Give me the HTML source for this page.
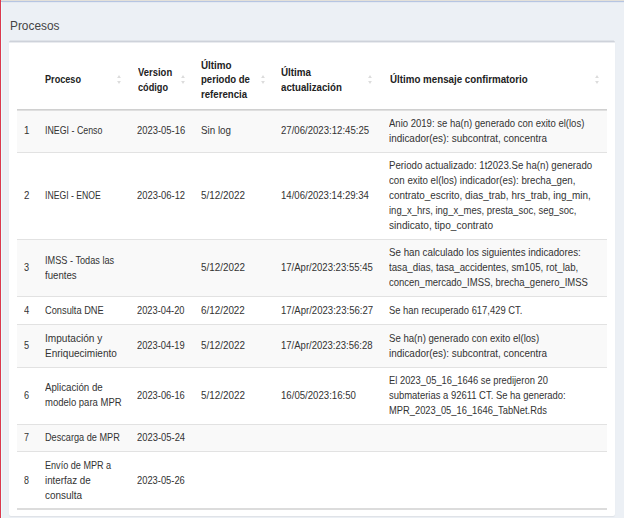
<!DOCTYPE html>
<html><head><meta charset="utf-8"><style>
html,body{margin:0;padding:0;width:624px;height:518px;overflow:hidden;background:#ecf0f5;position:relative}
.t{position:absolute;white-space:nowrap;line-height:1;font-family:"Liberation Sans",sans-serif;color:#333;transform-origin:0 0}
.a{position:absolute}
</style></head><body>
<div class="a" style="left:0;top:0;width:624px;height:1px;background:#e3e0d9"></div>
<div class="a" style="left:0;top:1px;width:624px;height:1px;background:#b6c5e2"></div>
<div class="a" style="left:0;top:2px;width:624px;height:1px;background:#e4e9f1"></div>
<div class="a" style="left:0;top:0;width:1px;height:518px;background:#db3a4f"></div>
<div class="a" style="left:1px;top:2px;width:1px;height:516px;background:#e8fdff"></div>
<div class="a" style="left:9px;top:41px;width:606px;height:475px;background:#fff;border-radius:2px;box-shadow:0 1px 1px rgba(0,0,0,0.06)"></div>
<div class="a" style="left:10px;top:40px;width:604px;height:1px;background:#dfe3e9"></div>
<div class="a" style="left:9px;top:41px;width:606px;height:1px;background:#ced2da;border-radius:2px 2px 0 0"></div>
<div class="a" style="left:9px;top:42px;width:606px;height:1px;background:#e9ebef"></div>

<div class="a" style="left:16.5px;top:110.5px;width:590.5px;height:41.5px;background:#f9f9f9"></div>
<div class="a" style="left:16.5px;top:240.1px;width:590.5px;height:56.400000000000006px;background:#f9f9f9"></div>
<div class="a" style="left:16.5px;top:325.0px;width:590.5px;height:42.0px;background:#f9f9f9"></div>
<div class="a" style="left:16.5px;top:424.8px;width:590.5px;height:27.0px;background:#f9f9f9"></div>
<div class="a" style="left:16.5px;top:109px;width:590.5px;height:1px;background:#d0d0d0"></div>
<div class="a" style="left:16.5px;top:110px;width:590.5px;height:1px;background:#dfdfdf"></div>
<div class="a" style="left:16.5px;top:151.5px;width:590.5px;height:1px;background:#e2e2e2"></div>
<div class="a" style="left:16.5px;top:239.1px;width:590.5px;height:1px;background:#e2e2e2"></div>
<div class="a" style="left:16.5px;top:296.0px;width:590.5px;height:1px;background:#e2e2e2"></div>
<div class="a" style="left:16.5px;top:324.0px;width:590.5px;height:1px;background:#e2e2e2"></div>
<div class="a" style="left:16.5px;top:366.5px;width:590.5px;height:1px;background:#e2e2e2"></div>
<div class="a" style="left:16.5px;top:423.8px;width:590.5px;height:1px;background:#e2e2e2"></div>
<div class="a" style="left:16.5px;top:451.3px;width:590.5px;height:1px;background:#e2e2e2"></div>
<div class="a" style="left:16.5px;top:508.25px;width:590.5px;height:1.5px;background:#dcdcdc"></div>
<svg class="a" style="left:116px;top:74px" width="6" height="11" viewBox="0 0 6 11"><path d="M1.1 3.9 L3 1.1 L4.9 3.9Z M1.1 7 L3 9.9 L4.9 7Z" fill="#dcdcdc"/></svg>
<svg class="a" style="left:179.5px;top:74px" width="6" height="11" viewBox="0 0 6 11"><path d="M1.1 3.9 L3 1.1 L4.9 3.9Z M1.1 7 L3 9.9 L4.9 7Z" fill="#dcdcdc"/></svg>
<svg class="a" style="left:259.7px;top:74px" width="6" height="11" viewBox="0 0 6 11"><path d="M1.1 3.9 L3 1.1 L4.9 3.9Z M1.1 7 L3 9.9 L4.9 7Z" fill="#dcdcdc"/></svg>
<svg class="a" style="left:367.2px;top:74px" width="6" height="11" viewBox="0 0 6 11"><path d="M1.1 3.9 L3 1.1 L4.9 3.9Z M1.1 7 L3 9.9 L4.9 7Z" fill="#dcdcdc"/></svg>
<svg class="a" style="left:593.7px;top:74px" width="6" height="11" viewBox="0 0 6 11"><path d="M1.1 3.9 L3 1.1 L4.9 3.9Z M1.1 7 L3 9.9 L4.9 7Z" fill="#dcdcdc"/></svg>
<div id="t0" class="t" style="left:24.35px;top:126.30px;font-size:10.1px;font-weight:400;color:#333;transform:scaleX(0.9685)">1</div>
<div id="t1" class="t" style="left:44.62px;top:126.30px;font-size:10.1px;font-weight:400;color:#333;transform:scaleX(0.8751)">INEGI - Censo</div>
<div id="t2" class="t" style="left:137.41px;top:126.30px;font-size:10.1px;font-weight:400;color:#333;transform:scaleX(0.9319)">2023-05-16</div>
<div id="t3" class="t" style="left:200.81px;top:126.30px;font-size:10.1px;font-weight:400;color:#333;transform:scaleX(0.9708)">Sin log</div>
<div id="t4" class="t" style="left:281.02px;top:126.30px;font-size:10.1px;font-weight:400;color:#333;transform:scaleX(0.9511)">27/06/2023:12:45:25</div>
<div id="t5" class="t" style="left:389.29px;top:118.80px;font-size:10.1px;font-weight:400;color:#333;transform:scaleX(0.9434)">Anio 2019: se ha(n) generado con exito el(los)</div>
<div id="t6" class="t" style="left:389.38px;top:133.80px;font-size:10.1px;font-weight:400;color:#333;transform:scaleX(0.9814)">indicador(es): subcontrat, concentra</div>
<div id="t7" class="t" style="left:24.40px;top:191.10px;font-size:10.1px;font-weight:400;color:#333;transform:scaleX(0.9600)">2</div>
<div id="t8" class="t" style="left:44.63px;top:191.10px;font-size:10.1px;font-weight:400;color:#333;transform:scaleX(0.8568)">INEGI - ENOE</div>
<div id="t9" class="t" style="left:137.41px;top:191.10px;font-size:10.1px;font-weight:400;color:#333;transform:scaleX(0.9314)">2023-06-12</div>
<div id="t10" class="t" style="left:201.11px;top:191.10px;font-size:10.1px;font-weight:400;color:#333;transform:scaleX(0.9772)">5/12/2022</div>
<div id="t11" class="t" style="left:281.03px;top:191.10px;font-size:10.1px;font-weight:400;color:#333;transform:scaleX(0.9489)">14/06/2023:14:29:34</div>
<div id="t12" class="t" style="left:389.09px;top:161.10px;font-size:10.1px;font-weight:400;color:#333;transform:scaleX(0.9577)">Periodo actualizado: 1t2023.Se ha(n) generado</div>
<div id="t13" class="t" style="left:389.37px;top:176.10px;font-size:10.1px;font-weight:400;color:#333;transform:scaleX(0.9634)">con exito el(los) indicador(es): brecha_gen,</div>
<div id="t14" class="t" style="left:389.37px;top:191.10px;font-size:10.1px;font-weight:400;color:#333;transform:scaleX(0.9825)">contrato_escrito, dias_trab, hrs_trab, ing_min,</div>
<div id="t15" class="t" style="left:389.38px;top:206.10px;font-size:10.1px;font-weight:400;color:#333;transform:scaleX(0.9412)">ing_x_hrs, ing_x_mes, presta_soc, seg_soc,</div>
<div id="t16" class="t" style="left:389.18px;top:221.10px;font-size:10.1px;font-weight:400;color:#333;transform:scaleX(1.0020)">sindicato, tipo_contrato</div>
<div id="t17" class="t" style="left:24.42px;top:263.35px;font-size:10.1px;font-weight:400;color:#333;transform:scaleX(0.9057)">3</div>
<div id="t18" class="t" style="left:44.62px;top:255.85px;font-size:10.1px;font-weight:400;color:#333;transform:scaleX(0.9079)">IMSS - Todas las</div>
<div id="t19" class="t" style="left:44.61px;top:270.85px;font-size:10.1px;font-weight:400;color:#333;transform:scaleX(0.9545)">fuentes</div>
<div id="t20" class="t" style="left:201.10px;top:263.35px;font-size:10.1px;font-weight:400;color:#333;transform:scaleX(0.9773)">5/12/2022</div>
<div id="t21" class="t" style="left:281.03px;top:263.35px;font-size:10.1px;font-weight:400;color:#333;transform:scaleX(0.9449)">17/Apr/2023:23:55:45</div>
<div id="t22" class="t" style="left:388.74px;top:248.35px;font-size:10.1px;font-weight:400;color:#333;transform:scaleX(0.9655)">Se han calculado los siguientes indicadores:</div>
<div id="t23" class="t" style="left:389.38px;top:263.35px;font-size:10.1px;font-weight:400;color:#333;transform:scaleX(0.9611)">tasa_dias, tasa_accidentes, sm105, rot_lab,</div>
<div id="t24" class="t" style="left:389.34px;top:278.35px;font-size:10.1px;font-weight:400;color:#333;transform:scaleX(0.9403)">concen_mercado_IMSS, brecha_genero_IMSS</div>
<div id="t25" class="t" style="left:24.38px;top:305.80px;font-size:10.1px;font-weight:400;color:#333;transform:scaleX(0.9317)">4</div>
<div id="t26" class="t" style="left:44.61px;top:305.80px;font-size:10.1px;font-weight:400;color:#333;transform:scaleX(0.9178)">Consulta DNE</div>
<div id="t27" class="t" style="left:137.41px;top:305.80px;font-size:10.1px;font-weight:400;color:#333;transform:scaleX(0.9205)">2023-04-20</div>
<div id="t28" class="t" style="left:201.16px;top:305.80px;font-size:10.1px;font-weight:400;color:#333;transform:scaleX(0.9760)">6/12/2022</div>
<div id="t29" class="t" style="left:281.03px;top:305.80px;font-size:10.1px;font-weight:400;color:#333;transform:scaleX(0.9485)">17/Apr/2023:23:56:27</div>
<div id="t30" class="t" style="left:388.75px;top:305.80px;font-size:10.1px;font-weight:400;color:#333;transform:scaleX(0.9320)">Se han recuperado 617,429 CT.</div>
<div id="t31" class="t" style="left:24.42px;top:341.05px;font-size:10.1px;font-weight:400;color:#333;transform:scaleX(0.9095)">5</div>
<div id="t32" class="t" style="left:44.60px;top:333.55px;font-size:10.1px;font-weight:400;color:#333;transform:scaleX(1.0018)">Imputación y</div>
<div id="t33" class="t" style="left:44.60px;top:348.55px;font-size:10.1px;font-weight:400;color:#333;transform:scaleX(0.9931)">Enriquecimiento</div>
<div id="t34" class="t" style="left:137.41px;top:341.05px;font-size:10.1px;font-weight:400;color:#333;transform:scaleX(0.9240)">2023-04-19</div>
<div id="t35" class="t" style="left:201.10px;top:341.05px;font-size:10.1px;font-weight:400;color:#333;transform:scaleX(0.9773)">5/12/2022</div>
<div id="t36" class="t" style="left:281.03px;top:341.05px;font-size:10.1px;font-weight:400;color:#333;transform:scaleX(0.9431)">17/Apr/2023:23:56:28</div>
<div id="t37" class="t" style="left:388.74px;top:333.55px;font-size:10.1px;font-weight:400;color:#333;transform:scaleX(0.9521)">Se ha(n) generado con exito el(los)</div>
<div id="t38" class="t" style="left:389.38px;top:348.55px;font-size:10.1px;font-weight:400;color:#333;transform:scaleX(0.9814)">indicador(es): subcontrat, concentra</div>
<div id="t39" class="t" style="left:24.42px;top:390.95px;font-size:10.1px;font-weight:400;color:#333;transform:scaleX(0.9047)">6</div>
<div id="t40" class="t" style="left:44.60px;top:383.45px;font-size:10.1px;font-weight:400;color:#333;transform:scaleX(0.9617)">Aplicación de</div>
<div id="t41" class="t" style="left:44.61px;top:398.45px;font-size:10.1px;font-weight:400;color:#333;transform:scaleX(0.9420)">modelo para MPR</div>
<div id="t42" class="t" style="left:137.41px;top:390.95px;font-size:10.1px;font-weight:400;color:#333;transform:scaleX(0.9258)">2023-06-16</div>
<div id="t43" class="t" style="left:201.12px;top:390.95px;font-size:10.1px;font-weight:400;color:#333;transform:scaleX(0.9768)">5/12/2022</div>
<div id="t44" class="t" style="left:281.02px;top:390.95px;font-size:10.1px;font-weight:400;color:#333;transform:scaleX(0.9538)">16/05/2023:16:50</div>
<div id="t45" class="t" style="left:389.19px;top:375.95px;font-size:10.1px;font-weight:400;color:#333;transform:scaleX(0.9282)">El 2023_05_16_1646 se predijeron 20</div>
<div id="t46" class="t" style="left:389.18px;top:390.95px;font-size:10.1px;font-weight:400;color:#333;transform:scaleX(0.9356)">submaterias a 92611 CT. Se ha generado:</div>
<div id="t47" class="t" style="left:389.19px;top:405.95px;font-size:10.1px;font-weight:400;color:#333;transform:scaleX(0.9251)">MPR_2023_05_16_1646_TabNet.Rds</div>
<div id="t48" class="t" style="left:24.42px;top:433.35px;font-size:10.1px;font-weight:400;color:#333;transform:scaleX(0.8900)">7</div>
<div id="t49" class="t" style="left:44.62px;top:433.35px;font-size:10.1px;font-weight:400;color:#333;transform:scaleX(0.9073)">Descarga de MPR</div>
<div id="t50" class="t" style="left:137.41px;top:433.35px;font-size:10.1px;font-weight:400;color:#333;transform:scaleX(0.9314)">2023-05-24</div>
<div id="t51" class="t" style="left:24.37px;top:475.70px;font-size:10.1px;font-weight:400;color:#333;transform:scaleX(0.8833)">8</div>
<div id="t52" class="t" style="left:44.62px;top:460.70px;font-size:10.1px;font-weight:400;color:#333;transform:scaleX(0.9001)">Envío de MPR a</div>
<div id="t53" class="t" style="left:44.60px;top:475.70px;font-size:10.1px;font-weight:400;color:#333;transform:scaleX(0.9702)">interfaz de</div>
<div id="t54" class="t" style="left:44.60px;top:490.70px;font-size:10.1px;font-weight:400;color:#333;transform:scaleX(0.9858)">consulta</div>
<div id="t55" class="t" style="left:137.41px;top:475.70px;font-size:10.1px;font-weight:400;color:#333;transform:scaleX(0.9258)">2023-05-26</div>
<div id="t56" class="t" style="left:44.62px;top:75.30px;font-size:10.4px;font-weight:700;color:#222;transform:scaleX(0.8780)">Proceso</div>
<div id="t57" class="t" style="left:137.66px;top:67.95px;font-size:10.4px;font-weight:700;color:#222;transform:scaleX(0.9100)">Version</div>
<div id="t58" class="t" style="left:137.62px;top:82.65px;font-size:10.4px;font-weight:700;color:#222;transform:scaleX(0.8822)">código</div>
<div id="t59" class="t" style="left:201.40px;top:60.60px;font-size:10.4px;font-weight:700;color:#222;transform:scaleX(0.9469)">Último</div>
<div id="t60" class="t" style="left:201.41px;top:75.30px;font-size:10.4px;font-weight:700;color:#222;transform:scaleX(0.9208)">periodo de</div>
<div id="t61" class="t" style="left:201.41px;top:90.00px;font-size:10.4px;font-weight:700;color:#222;transform:scaleX(0.9273)">referencia</div>
<div id="t62" class="t" style="left:281.40px;top:67.95px;font-size:10.4px;font-weight:700;color:#222;transform:scaleX(0.9469)">Última</div>
<div id="t63" class="t" style="left:281.41px;top:82.65px;font-size:10.4px;font-weight:700;color:#222;transform:scaleX(0.9323)">actualización</div>
<div id="t64" class="t" style="left:389.61px;top:75.30px;font-size:10.4px;font-weight:700;color:#222;transform:scaleX(0.9396)">Último mensaje confirmatorio</div>
<div id="t65" class="t" style="left:9.62px;top:18.73px;font-size:13.2px;font-weight:400;color:#444;transform:scaleX(0.9000)">Procesos</div>
</body></html>
